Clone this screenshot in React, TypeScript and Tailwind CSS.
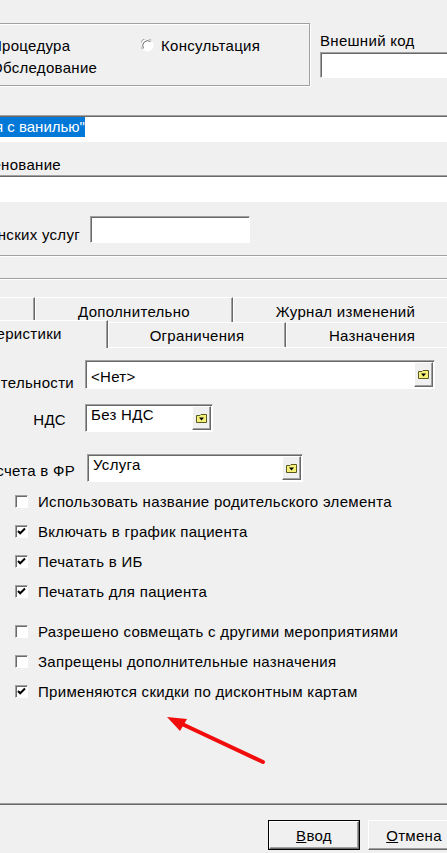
import type { ReactNode } from 'react';

const sunken =
  'border border-t-[#a0a0a0] border-l-[#a0a0a0] border-b-white border-r-white shadow-[inset_1px_1px_0_#696969]';
const raised =
  'border border-t-white border-l-white border-b-[#696969] border-r-[#696969] shadow-[inset_-1px_-1px_0_#a0a0a0]';

function Radio({ label }: { label: string }) {
  return (
    <div className="flex items-center h-[17px] whitespace-nowrap">
      <svg width="13" height="13" viewBox="0 0 13 13" className="shrink-0">
        <circle cx="6.5" cy="6.5" r="6" fill="#fff" />
        <path d="M1.3 10.3 A6 6 0 0 1 10.3 1.3" fill="none" stroke="#a0a0a0" strokeWidth="1" />
        <path d="M2.5 9.4 A5 5 0 0 1 9.4 2.5" fill="none" stroke="#696969" strokeWidth="1" />
      </svg>
      <span className="ml-[7px]">{label}</span>
    </div>
  );
}

function FolderIcon() {
  return (
    <svg width="11" height="9" viewBox="0 0 11 9">
      <path d="M0.5 1.5 H4 L5 0.5 H10.5 V8.5 H0.5 Z" fill="#f5f07a" stroke="#5a5a20" strokeWidth="1" />
      <path d="M3 3.5 H8 L5.5 6.5 Z" fill="#000" />
    </svg>
  );
}

function Combo({ value, className, pad }: { value: string; className: string; pad: string }) {
  return (
    <div className={`${sunken} bg-white flex shrink-0 ${className}`}>
      <div className={`flex-1 pl-[5px] whitespace-nowrap ${pad}`}>{value}</div>
      <div className={`${raised} bg-[#f0f0f0] w-[19px] my-[1px] mr-[1px] flex items-center justify-center`}>
        <FolderIcon />
      </div>
    </div>
  );
}

function Check({ label, checked }: { label: string; checked?: boolean }) {
  return (
    <div className="flex items-center h-[30px] pl-[115px]">
      <div className={`${sunken} bg-white w-[13px] h-[13px] shrink-0 flex items-center justify-center`}>
        {checked && (
          <svg width="9" height="9" viewBox="0 0 9 9">
            <path d="M1 4 L3.2 6.3 L8 1.5" fill="none" stroke="#000" strokeWidth="2" />
          </svg>
        )}
      </div>
      <span className="ml-[10px] whitespace-nowrap">{label}</span>
    </div>
  );
}

function Tab({ children, className }: { children: ReactNode; className: string }) {
  return (
    <div
      className={`border-t border-l border-r border-t-white border-l-white border-r-[#696969] shadow-[inset_-1px_0_0_#a0a0a0] flex justify-center shrink-0 whitespace-nowrap ${className}`}
    >
      {children}
    </div>
  );
}

function Label({ text, width, className }: { text: string; width: string; className?: string }) {
  return (
    <div className={`flex justify-end shrink-0 ${width} ${className ?? ''}`}>
      <span className="whitespace-nowrap">{text}</span>
    </div>
  );
}

function DlgButton({ children, isDefault }: { children: ReactNode; isDefault?: boolean }) {
  return (
    <div className={`w-[92px] h-[30px] shrink-0 ${isDefault ? 'border border-black' : ''}`}>
      <div className={`${raised} h-full flex items-center justify-center`}>{children}</div>
    </div>
  );
}

export default function App() {
  return (
    <div className="relative w-[447px] h-[853px] overflow-hidden bg-[#f0f0f0] font-['Liberation_Sans',Arial,sans-serif] text-[15px] leading-[17px] tracking-[0.3px] text-black">
      <div className="ml-[-100px] w-[660px] flex flex-col">
        {/* тип мероприятия + внешний код */}
        <div className="flex items-start h-[100px] pt-[23px]">
          <div className="w-[410px] h-[63px] shrink-0 border border-[#a0a0a0] shadow-[inset_1px_1px_0_#fff,1px_1px_0_#fff] flex pt-[13px]">
            <div className="ml-[70px] w-[170px] flex flex-col gap-[5px]">
              <Radio label="Процедура" />
              <Radio label="Обследование" />
            </div>
            <div>
              <Radio label="Консультация" />
            </div>
          </div>
          <div className="ml-[10px] mt-[9px] flex flex-col">
            <span className="whitespace-nowrap">Внешний код</span>
            <div className={`${sunken} bg-white mt-[3px] w-[200px] h-[26px]`} />
          </div>
        </div>

        {/* наименование */}
        <div className={`${sunken} bg-white mt-[15px] h-[27px] w-[660px] pl-[94px] pt-[1px]`}>
          <span className="bg-[#0078d7] text-white leading-[20px] tracking-normal inline-block whitespace-nowrap">
            я с ванилью"
          </span>
        </div>
        <Label text="Полное наименование" width="w-[161px]" className="h-[33px] pt-[14px]" />
        <div className={`${sunken} bg-white h-[27px] w-[660px]`} />

        <div className="flex items-start mt-[14px] h-[27px]">
          <Label text="Код по номенклатуре медицинских услуг" width="w-[180px]" className="mt-[10px]" />
          <div className={`${sunken} bg-white ml-[10px] w-[160px] h-[27px]`} />
        </div>

        <div className="mt-[12px] h-[24px] border-t border-b border-[#a0a0a0] shadow-[inset_0_1px_0_#fff,0_1px_0_#fff]" />

        {/* вкладки */}
        <div className="mt-[18px] w-[558px] flex flex-col">
          <div className="flex h-[25px]">
            <Tab className="w-[135px] h-[25px] pt-[5px]">Общие</Tab>
            <Tab className="w-[198px] h-[25px] pt-[5px]">Дополнительно</Tab>
            <Tab className="w-[225px] h-[25px] pt-[5px]">Журнал изменений</Tab>
          </div>
          <div className="relative z-10 flex items-start h-[28px] -mt-[2px] -mb-[1px]">
            <Tab className="w-[208px] h-[28px] pt-[4px] bg-[#f0f0f0]">Характеристики</Tab>
            <Tab className="w-[178px] h-[25px] mt-[2px] pt-[4px]">Ограничения</Tab>
            <Tab className="w-[172px] h-[25px] mt-[2px] pt-[4px]">Назначения</Tab>
          </div>
          <div className="h-[458px] border-t border-t-white border-b border-b-[#696969] shadow-[inset_0_-1px_0_#a0a0a0] flex flex-col">
            <div className="flex items-start mt-[12px]">
              <Label text="Вид деятельности" width="w-[174px]" className="mt-[14px]" />
              <Combo value="<Нет>" className="ml-[11px] w-[350px] h-[29px]" pad="pt-[7px]" />
            </div>
            <div className="flex items-start mt-[13px]">
              <Label text="НДС" width="w-[166px]" className="mt-[7px]" />
              <Combo value="Без НДС" className="ml-[19px] w-[128px] h-[28px]" pad="pt-[1px]" />
            </div>
            <div className="flex items-start mt-[22px]">
              <Label text="Признак расчета в ФР" width="w-[175px]" className="mt-[8px]" />
              <Combo value="Услуга" className="ml-[12px] w-[216px] h-[28px]" pad="pt-[1px]" />
            </div>

            <div className="mt-[4px] flex flex-col">
              <Check label="Использовать название родительского элемента" />
              <Check label="Включать в график пациента" checked />
              <Check label="Печатать в ИБ" checked />
              <Check label="Печатать для пациента" checked />
            </div>
            <div className="mt-[10px] flex flex-col">
              <Check label="Разрешено совмещать с другими мероприятиями" />
              <Check label="Запрещены дополнительные назначения" />
              <Check label="Применяются скидки по дисконтным картам" checked />
            </div>
          </div>
        </div>

        {/* кнопки */}
        <div className="flex mt-[15px] pl-[368px] gap-[8px]">
          <DlgButton isDefault>
            <span>
              <span className="underline">В</span>вод
            </span>
          </DlgButton>
          <DlgButton>
            <span>
              <span className="underline">О</span>тмена
            </span>
          </DlgButton>
        </div>
      </div>

      {/* красная стрелка */}
      <svg className="absolute left-0 top-0 pointer-events-none" width="447" height="853" viewBox="0 0 447 853">
        <line x1="263" y1="762" x2="182" y2="724" stroke="#f20d0d" strokeWidth="4" strokeLinecap="round" />
        <polygon points="167,717 187,719 180,731" fill="#f20d0d" />
      </svg>
    </div>
  );
}
